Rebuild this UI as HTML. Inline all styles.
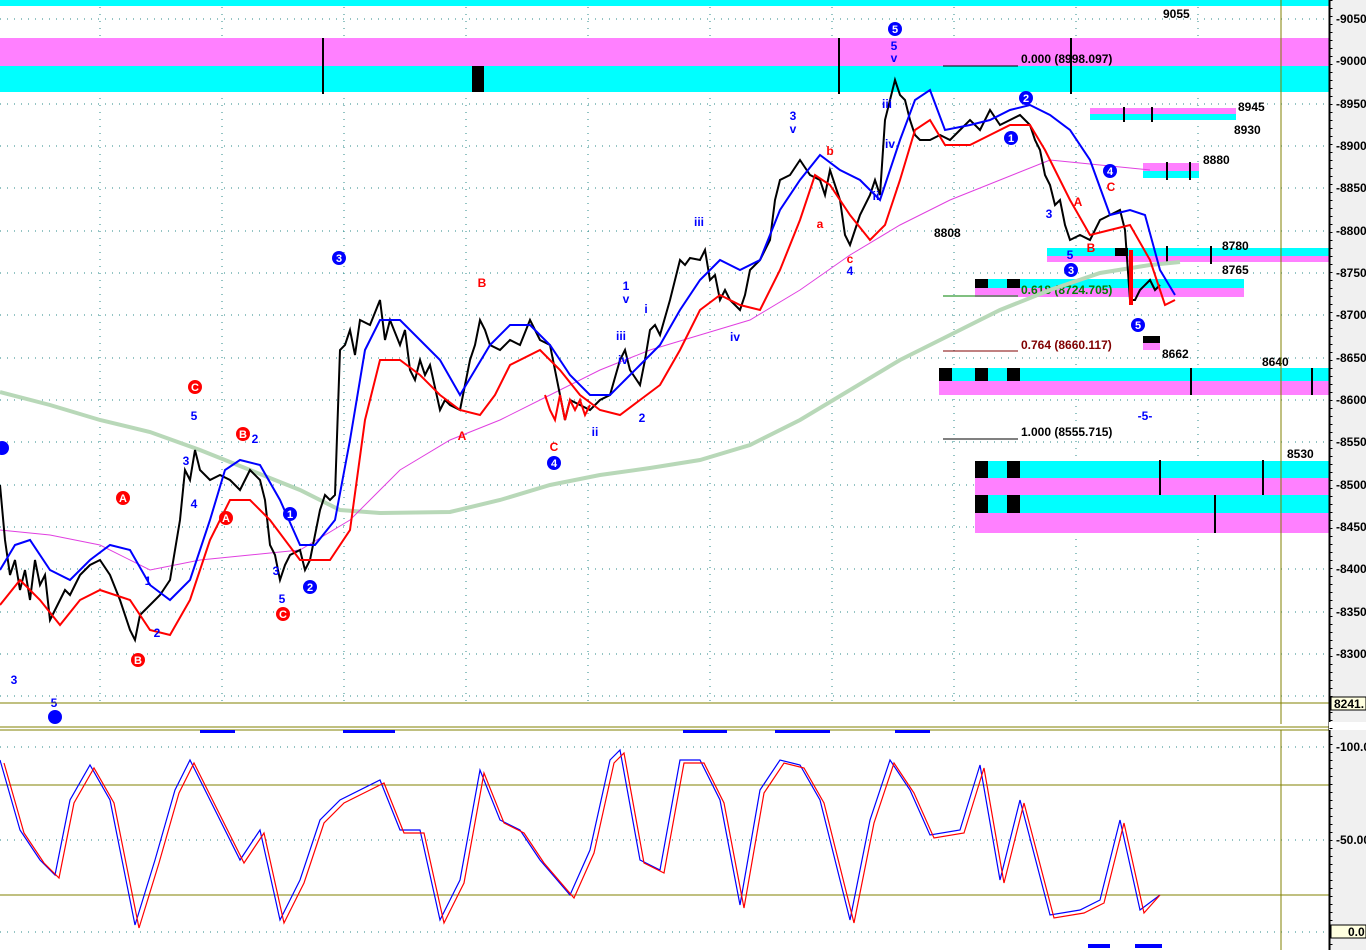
<!DOCTYPE html>
<html><head><meta charset="utf-8"><style>
html,body{margin:0;padding:0;background:#fff;width:1366px;height:950px;overflow:hidden}
svg{display:block}
text{font-family:"Liberation Sans",sans-serif;font-weight:bold}
</style></head><body>
<svg width="1366" height="950" viewBox="0 0 1366 950" xmlns="http://www.w3.org/2000/svg">
<rect x="0" y="0" width="1366" height="950" fill="#fff"/>
<g stroke="#2a8a8a" stroke-width="1" stroke-dasharray="1,6">
<line x1="0" y1="19" x2="1329" y2="19"/><line x1="0" y1="61" x2="1329" y2="61"/><line x1="0" y1="104" x2="1329" y2="104"/><line x1="0" y1="146" x2="1329" y2="146"/><line x1="0" y1="188" x2="1329" y2="188"/><line x1="0" y1="231" x2="1329" y2="231"/><line x1="0" y1="273" x2="1329" y2="273"/><line x1="0" y1="315" x2="1329" y2="315"/><line x1="0" y1="358" x2="1329" y2="358"/><line x1="0" y1="400" x2="1329" y2="400"/><line x1="0" y1="442" x2="1329" y2="442"/><line x1="0" y1="485" x2="1329" y2="485"/><line x1="0" y1="527" x2="1329" y2="527"/><line x1="0" y1="569" x2="1329" y2="569"/><line x1="0" y1="612" x2="1329" y2="612"/><line x1="0" y1="654" x2="1329" y2="654"/><line x1="0" y1="696" x2="1329" y2="696"/>
<line x1="0" y1="747" x2="1329" y2="747"/><line x1="0" y1="840" x2="1329" y2="840"/><line x1="0" y1="932" x2="1329" y2="932"/>
<line x1="100" y1="0" x2="100" y2="703"/><line x1="222" y1="0" x2="222" y2="703"/><line x1="344" y1="0" x2="344" y2="703"/><line x1="466" y1="0" x2="466" y2="703"/><line x1="588" y1="0" x2="588" y2="703"/><line x1="710" y1="0" x2="710" y2="703"/><line x1="832" y1="0" x2="832" y2="703"/><line x1="954" y1="0" x2="954" y2="703"/><line x1="1076" y1="0" x2="1076" y2="703"/><line x1="1198" y1="0" x2="1198" y2="703"/>
</g>
<rect x="0" y="0" width="1329" height="6" fill="#00ffff"/>
<rect x="0" y="38" width="1329" height="28" fill="#ff80ff"/>
<rect x="0" y="66" width="1329" height="26" fill="#00ffff"/>
<rect x="472" y="66" width="12" height="26" fill="#000"/>
<g stroke="#000" stroke-width="2"><line x1="323" y1="38" x2="323" y2="94"/><line x1="839" y1="38" x2="839" y2="94"/><line x1="1071" y1="38" x2="1071" y2="94"/></g>
<rect x="1090" y="108" width="146" height="6" fill="#ff80ff"/><rect x="1090" y="114" width="146" height="6" fill="#00ffff"/>
<rect x="1143" y="163" width="56" height="8" fill="#ff80ff"/><rect x="1143" y="171" width="56" height="7" fill="#00ffff"/>
<rect x="1047" y="248" width="282" height="8" fill="#00ffff"/><rect x="1047" y="256" width="282" height="6" fill="#ff80ff"/>
<rect x="975" y="279" width="269" height="9" fill="#00ffff"/><rect x="975" y="288" width="269" height="9" fill="#ff80ff"/>
<rect x="975" y="279" width="13" height="9" fill="#000"/><rect x="1007" y="279" width="13" height="9" fill="#000"/><rect x="1115" y="248" width="13" height="8" fill="#000"/>
<rect x="939" y="368" width="390" height="13" fill="#00ffff"/><rect x="939" y="381" width="390" height="14" fill="#ff80ff"/>
<rect x="939" y="368" width="13" height="13" fill="#000"/><rect x="975" y="368" width="13" height="13" fill="#000"/><rect x="1007" y="368" width="13" height="13" fill="#000"/>
<rect x="975" y="461" width="354" height="17" fill="#00ffff"/><rect x="975" y="478" width="354" height="17" fill="#ff80ff"/>
<rect x="975" y="495" width="354" height="18" fill="#00ffff"/><rect x="975" y="513" width="354" height="20" fill="#ff80ff"/>
<rect x="975" y="461" width="13" height="17" fill="#000"/><rect x="1007" y="461" width="13" height="17" fill="#000"/>
<rect x="975" y="495" width="13" height="18" fill="#000"/><rect x="1007" y="495" width="13" height="18" fill="#000"/>
<rect x="1143" y="336" width="17" height="7" fill="#000"/><rect x="1143" y="343" width="17" height="7" fill="#ff80ff"/>
<g stroke="#000" stroke-width="2">
<line x1="1124" y1="107" x2="1124" y2="122"/><line x1="1152" y1="107" x2="1152" y2="122"/>
<line x1="1167" y1="162" x2="1167" y2="180"/><line x1="1190" y1="162" x2="1190" y2="180"/>
<line x1="1167" y1="246" x2="1167" y2="264"/><line x1="1211" y1="246" x2="1211" y2="264"/>
<line x1="1191" y1="368" x2="1191" y2="395"/><line x1="1312" y1="368" x2="1312" y2="395"/>
<line x1="1160" y1="460" x2="1160" y2="495"/><line x1="1263" y1="460" x2="1263" y2="495"/><line x1="1215" y1="495" x2="1215" y2="533"/>
</g>
<line x1="943" y1="66" x2="1018" y2="66" stroke="#000"/>
<line x1="943" y1="296" x2="1018" y2="296" stroke="#008000"/>
<line x1="943" y1="351" x2="1018" y2="351" stroke="#800000"/>
<line x1="943" y1="439" x2="1018" y2="439" stroke="#000"/>
<g font-size="12">
<text x="1021" y="63" fill="#000">0.000 (8998.097)</text>
<text x="1021" y="294" fill="#008000">0.618 (8724.705)</text>
<text x="1021" y="349" fill="#800000">0.764 (8660.117)</text>
<text x="1021" y="436" fill="#000">1.000 (8555.715)</text>
<text x="1163" y="18">9055</text><text x="1238" y="111">8945</text><text x="1234" y="134">8930</text>
<text x="1203" y="164">8880</text><text x="934" y="237">8808</text><text x="1222" y="250">8780</text>
<text x="1222" y="274">8765</text><text x="1162" y="358">8662</text><text x="1262" y="366">8640</text><text x="1287" y="458">8530</text>
</g>
<polyline fill="none" stroke="#b8d8b8" stroke-width="4" points="0,392 50,405 100,420 150,432 200,450 250,470 300,490 340,510 380,513 450,512 500,500 550,485 600,475 650,468 700,460 750,445 800,420 850,390 900,360 950,335 1000,310 1050,290 1100,273 1150,265 1180,262"/>
<polyline fill="none" stroke="#e040e0" stroke-width="1" points="0,530 50,535 100,545 150,570 200,560 250,555 300,550 350,520 400,470 450,440 500,420 550,395 600,370 650,350 700,335 750,320 800,290 850,255 900,225 950,200 1000,180 1050,160 1100,165 1150,170"/>
<!-- price line (approximating candles) -->
<polyline fill="none" stroke="#000" stroke-width="2" points="0,485 5,540 10,575 15,560 20,590 25,570 30,600 35,560 40,585 45,575 50,620 55,610 60,600 65,590 70,595 80,575 90,565 100,560 110,575 120,600 130,630 135,640 140,615 150,605 160,595 170,580 180,520 185,470 190,480 195,450 200,470 210,480 220,475 230,480 240,490 250,470 260,480 265,500 270,545 275,555 280,580 285,565 290,555 300,550 305,570 310,560 320,510 325,495 330,500 335,495 340,350 345,345 350,330 355,355 360,320 370,325 380,300 385,340 390,320 400,345 405,330 410,370 415,380 420,360 425,375 430,365 440,410 445,400 450,405 460,410 465,385 470,360 475,345 480,320 485,330 490,345 500,350 510,340 520,345 530,320 540,340 550,345 560,395 565,420 570,400 580,405 590,410 600,400 610,395 620,360 625,350 630,370 640,385 645,360 650,330 655,325 660,335 670,300 680,260 685,265 690,258 700,260 705,250 710,280 715,275 720,300 725,290 730,300 740,310 745,295 750,270 760,260 770,240 775,200 780,180 790,175 800,160 810,175 820,180 825,195 830,170 840,200 845,235 850,245 855,230 860,215 870,195 875,180 880,195 885,120 890,100 895,80 900,95 905,100 910,120 915,135 920,140 930,140 940,135 950,140 960,130 970,120 980,130 990,110 1000,125 1010,120 1020,115 1030,125 1035,140 1040,150 1045,175 1050,185 1055,205 1060,200 1065,225 1070,240 1080,235 1090,240 1100,220 1110,215 1120,210 1125,230 1130,300 1135,300 1140,290 1150,280 1155,290 1160,285"/>
<polyline fill="none" stroke="#ff0000" stroke-width="2" points="545,395 550,410 555,420 560,395 565,420 570,400 575,410 580,400 585,415 590,405"/>
<line x1="1131" y1="250" x2="1131" y2="305" stroke="#ff0000" stroke-width="4"/>
<polyline fill="none" stroke="#0000ff" stroke-width="2" points="0,570 15,545 30,540 50,570 70,580 90,560 110,545 130,550 150,585 170,600 190,580 210,520 225,470 240,460 260,465 280,500 300,545 315,545 335,520 350,440 365,350 380,320 400,320 420,340 440,360 460,395 475,370 490,345 510,325 530,325 550,345 570,375 590,395 610,395 625,380 640,365 660,345 680,310 700,280 720,260 740,270 760,260 780,210 800,180 820,155 840,170 860,180 880,200 900,140 915,100 930,90 945,130 970,125 990,120 1010,110 1030,105 1050,115 1070,130 1090,160 1110,215 1130,210 1145,215 1160,270 1175,295"/>
<polyline fill="none" stroke="#ff0000" stroke-width="2" points="0,605 20,580 40,600 60,625 80,600 100,590 130,600 150,630 170,635 190,600 210,540 230,500 250,500 270,520 300,560 330,560 350,530 365,420 380,360 400,360 420,375 440,395 460,410 480,415 495,395 510,365 540,350 560,370 580,395 600,410 620,415 640,400 660,385 680,350 700,310 720,295 740,305 760,310 780,270 800,220 815,175 830,185 850,215 870,240 885,225 900,180 915,130 930,120 945,145 970,145 990,135 1010,125 1030,125 1045,150 1070,200 1090,235 1110,230 1130,225 1150,260 1165,305 1175,300"/>
<g font-size="11" text-anchor="middle">
<g fill="#0000ff"><circle cx="895" cy="29" r="7"/><circle cx="339" cy="258" r="7"/><circle cx="554" cy="463" r="7"/><circle cx="290" cy="514" r="7"/><circle cx="310" cy="587" r="7"/><circle cx="1026" cy="98" r="7"/><circle cx="1011" cy="138" r="7"/><circle cx="1110" cy="171" r="7"/><circle cx="1071" cy="270" r="7"/><circle cx="1138" cy="325" r="7"/><circle cx="55" cy="717" r="7"/><circle cx="2" cy="448" r="7"/></g>
<g fill="#ff0000"><circle cx="195" cy="387" r="7"/><circle cx="243" cy="434" r="7"/><circle cx="123" cy="498" r="7"/><circle cx="226" cy="518" r="7"/><circle cx="138" cy="660" r="7"/><circle cx="283" cy="614" r="7"/></g>
<g fill="#fff"><text x="895" y="33">5</text><text x="339" y="262">3</text><text x="554" y="467">4</text><text x="290" y="518">1</text><text x="310" y="591">2</text><text x="1026" y="102">2</text><text x="1011" y="142">1</text><text x="1110" y="175">4</text><text x="1071" y="274">3</text><text x="1138" y="329">5</text>
<text x="195" y="391">C</text><text x="243" y="438">B</text><text x="123" y="502">A</text><text x="226" y="522">A</text><text x="138" y="664">B</text><text x="283" y="618">C</text></g>
<g fill="#0000ff" font-size="12"><text x="894" y="50">5</text><text x="894" y="62">v</text><text x="793" y="120">3</text><text x="793" y="133">v</text><text x="699" y="226">iii</text><text x="626" y="290">1</text><text x="626" y="303">v</text><text x="194" y="420">5</text><text x="186" y="465">3</text><text x="194" y="508">4</text><text x="148" y="585">1</text><text x="157" y="637">2</text><text x="14" y="684">3</text><text x="54" y="707">5</text><text x="282" y="603">5</text><text x="276" y="575">3</text><text x="255" y="443">2</text><text x="850" y="275">4</text><text x="642" y="422">2</text><text x="595" y="436">ii</text><text x="735" y="341">iv</text><text x="1070" y="259">5</text><text x="1049" y="218">3</text><text x="1145" y="420">-5-</text><text x="887" y="108">iii</text><text x="890" y="148">iv</text><text x="876" y="200">ii</text><text x="646" y="313">i</text><text x="621" y="340">iii</text><text x="623" y="364">iv</text></g>
<g fill="#ff0000" font-size="12"><text x="482" y="287">B</text><text x="462" y="440">A</text><text x="554" y="451">C</text><text x="830" y="155">b</text><text x="820" y="228">a</text><text x="850" y="263">c</text><text x="1111" y="191">C</text><text x="1078" y="206">A</text><text x="1091" y="252">B</text></g>
</g>
<line x1="0" y1="703" x2="1329" y2="703" stroke="#808000"/>
<line x1="1281" y1="0" x2="1281" y2="950" stroke="#808000"/>
<rect x="0" y="724" width="1329" height="6" fill="#fff"/>
<line x1="0" y1="727" x2="1329" y2="727" stroke="#808000"/>
<line x1="0" y1="730" x2="1329" y2="730" stroke="#808000"/>
<g fill="#0000ff"><rect x="200" y="730" width="35" height="3"/><rect x="343" y="730" width="52" height="3"/><rect x="683" y="730" width="44" height="3"/><rect x="775" y="730" width="55" height="3"/><rect x="895" y="730" width="35" height="3"/><rect x="1088" y="944" width="22" height="4"/><rect x="1135" y="944" width="27" height="4"/></g>
<line x1="0" y1="785" x2="1329" y2="785" stroke="#808000"/>
<line x1="0" y1="895" x2="1329" y2="895" stroke="#808000"/>
<polyline fill="none" stroke="#0000ff" stroke-width="1.2" points="0,760 20,830 40,860 55,875 70,800 90,765 110,800 135,925 155,860 175,790 190,760 210,800 240,860 260,830 280,920 300,880 320,820 340,800 380,780 400,830 420,830 440,920 460,880 480,770 500,820 520,830 540,860 570,895 590,850 610,760 620,750 640,860 660,870 680,760 700,760 720,800 740,905 760,790 780,760 800,765 820,800 850,920 870,820 890,760 910,790 930,835 960,830 980,765 1000,880 1020,800 1050,915 1080,910 1100,900 1120,820 1140,910 1160,895"/>
<polyline fill="none" stroke="#ff0000" stroke-width="1.2" transform="translate(4,3)" points="0,760 20,830 40,860 55,875 70,800 90,765 110,800 135,925 155,860 175,790 190,760 210,800 240,860 260,830 280,920 300,880 320,820 340,800 380,780 400,830 420,830 440,920 460,880 480,770 500,820 520,830 540,860 570,895 590,850 610,760 620,750 640,860 660,870 680,760 700,760 720,800 740,905 760,790 780,760 800,765 820,800 850,920 870,820 890,760 910,790 930,835 960,830 980,765 1000,880 1020,800 1050,915 1080,910 1100,900 1120,820 1140,910 1156,892"/>
<rect x="1329" y="0" width="37" height="950" fill="#f0f0f0"/>
<line x1="1329.5" y1="0" x2="1329.5" y2="950" stroke="#000" stroke-width="2"/>
<rect x="1329" y="722" width="37" height="8" fill="#fff"/>
<line x1="1331" y1="0" x2="1331" y2="950" stroke="#000" stroke-width="3" stroke-dasharray="1,7"/>
<g font-size="12" fill="#000">
<text x="1336" y="23">-9050</text><text x="1336" y="65">-9000</text><text x="1336" y="108">-8950</text><text x="1336" y="150">-8900</text><text x="1336" y="192">-8850</text><text x="1336" y="235">-8800</text><text x="1336" y="277">-8750</text><text x="1336" y="319">-8700</text><text x="1336" y="362">-8650</text><text x="1336" y="404">-8600</text><text x="1336" y="446">-8550</text><text x="1336" y="489">-8500</text><text x="1336" y="531">-8450</text><text x="1336" y="573">-8400</text><text x="1336" y="616">-8350</text><text x="1336" y="658">-8300</text>
<text x="1336" y="751">-100.0</text><text x="1336" y="844">-50.00</text>
</g>
<rect x="1331" y="697" width="35" height="13" fill="#ffffe0" stroke="#000"/>
<text x="1334" y="708" font-size="12">8241.</text>
<rect x="1331" y="925" width="35" height="13" fill="#ffffe0" stroke="#000"/>
<text x="1348" y="936" font-size="12">0.0</text>
</svg>
</body></html>
